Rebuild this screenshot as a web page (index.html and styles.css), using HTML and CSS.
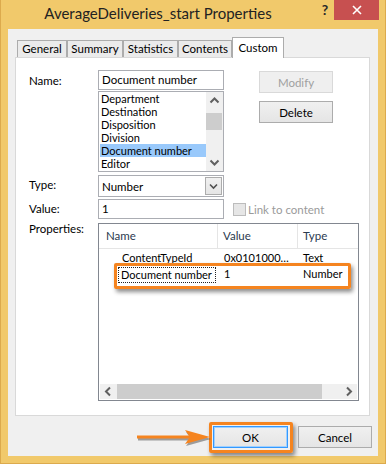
FILE: index.html
```html
<!DOCTYPE html>
<html lang="en">
<head>
    <meta charset="UTF-8">
    <title>AverageDeliveries_start Properties</title>
    <link rel="stylesheet" href="styles.css">
</head>
<body>
    <div class="window">
        <div class="titlebar">
            <div class="title">AverageDeliveries_start Properties</div>
            <div class="help">?</div>
            <div class="close">
                <svg width="10" height="10" viewBox="0 0 10 10"><path d="M1 1 L9 9 M9 1 L1 9" stroke="#fff" stroke-width="1.6"/></svg>
            </div>
        </div>

        <div class="client">
            <div class="tabs">
                <div class="tab" style="width:50px">General</div>
                <div class="tab" style="width:56px">Summary</div>
                <div class="tab" style="width:55px">Statistics</div>
                <div class="tab" style="width:54px">Contents</div>
                <div class="tab active" style="width:52px">Custom</div>
            </div>

            <div class="panel">
                <div class="form">
                    <div class="lbl row-name">Name:</div>
                    <div class="field name-field">Document number</div>
                    <div class="side-buttons">
                        <button class="btn disabled">Modify</button>
                        <button class="btn">Delete</button>
                    </div>

                    <div class="listbox">
                        <ul class="items">
                            <li>Department</li>
                            <li>Destination</li>
                            <li>Disposition</li>
                            <li>Division</li>
                            <li class="selected">Document number</li>
                            <li>Editor</li>
                        </ul>
                        <div class="vscroll">
                            <div class="sb-btn"><svg width="17" height="17"><polyline points="4.5,10.5 8.5,6.5 12.5,10.5" fill="none" stroke="#606060" stroke-width="2"/></svg></div>
                            <div class="sb-track"><div class="sb-thumb"></div></div>
                            <div class="sb-btn"><svg width="17" height="17"><polyline points="4.5,6.5 8.5,10.5 12.5,6.5" fill="none" stroke="#606060" stroke-width="2"/></svg></div>
                        </div>
                    </div>

                    <div class="lbl row-type">Type:</div>
                    <div class="select">
                        <span>Number</span>
                        <span class="drop"><svg width="15" height="16"><polyline points="4,6.5 7.5,10 11,6.5" fill="none" stroke="#505050" stroke-width="1.6"/></svg></span>
                    </div>

                    <div class="lbl row-value">Value:</div>
                    <div class="field value-field">1</div>
                    <div class="link"><span class="checkbox"></span>Link to content</div>

                    <div class="lbl row-props">Properties:</div>
                    <div class="listview">
                        <div class="lv-head">
                            <div class="c1">Name</div>
                            <div class="c2">Value</div>
                            <div class="c3">Type</div>
                        </div>
                        <div class="lv-rows">
                            <div class="lv-row">
                                <div class="c1"><span class="cell-text">ContentTypeId</span></div>
                                <div class="c2">0x0101000…</div>
                                <div class="c3">Text</div>
                            </div>
                            <div class="lv-row">
                                <div class="c1"><span class="cell-text focus">Document number</span></div>
                                <div class="c2">1</div>
                                <div class="c3">Number</div>
                            </div>
                        </div>
                        <div class="hscroll">
                            <div class="sb-btn"><svg width="17" height="15"><polyline points="10,3.5 6,7.5 10,11.5" fill="none" stroke="#606060" stroke-width="2"/></svg></div>
                            <div class="sb-track"><div class="sb-thumb"></div></div>
                            <div class="sb-btn"><svg width="17" height="15"><polyline points="7,3.5 11,7.5 7,11.5" fill="none" stroke="#606060" stroke-width="2"/></svg></div>
                        </div>
                    </div>
                </div>
            </div>

            <div class="footer">
                <button class="btn ok">OK</button>
                <button class="btn">Cancel</button>
            </div>
        </div>

        <!-- callouts drawn over the dialog -->
        <div class="callout hl-row"></div>
        <div class="callout hl-ok"></div>
        <svg class="arrow" width="90" height="26" viewBox="0 0 90 26">
            <g transform="translate(1,2)" fill="rgba(0,0,0,0.35)">
                <rect x="7" y="10.5" width="55" height="3"/>
                <path d="M55 5 L80 12 L55 19 L60 12 Z"/>
            </g>
            <g fill="#f5841f">
                <rect x="7" y="10.5" width="55" height="3"/>
                <path d="M55 5 L80 12 L55 19 L60 12 Z"/>
            </g>
        </svg>
    </div>
</body>
</html>
```

FILE: styles.css
```css
* {
    box-sizing: border-box;
}

body {
    margin: 0;
    font-family: "Lato", "Open Sans", sans-serif;
    font-size: 11.5px;
    color: #000;
    background: #f1c96b;
}

.window {
    position: relative;
    width: 386px;
    height: 464px;
    background: #f1c96b;
    border: 1px solid #dcaa4d;
    border-top: none;
    padding: 0 7px 7px;
    display: flex;
    flex-direction: column;
}

.titlebar {
    height: 29px;
    display: flex;
    align-items: flex-start;
}

.title {
    flex: 1;
    text-align: center;
    font-size: 15px;
    line-height: 27px;
    color: #222;
    padding-right: 8px;
}

.help {
    width: 18px;
    height: 20px;
    line-height: 20px;
    text-align: center;
    font-weight: bold;
    font-size: 14px;
    color: #2a2a2a;
}

.close {
    width: 45px;
    height: 20px;
    margin-right: -1px;
    background: #c75050;
    display: flex;
    align-items: center;
    justify-content: center;
}

.client {
    flex: 1;
    background: #f0f0f0;
    padding: 8px 8px 0 7px;
}

.tabs {
    display: flex;
    align-items: flex-end;
    height: 20px;
    padding-left: 2px;
}

.tab {
    height: 17px;
    line-height: 15px;
    border: 1px solid #acacac;
    border-bottom: none;
    background: #ebebeb;
    text-align: center;
    white-space: nowrap;
}

.tab.active {
    position: relative;
    z-index: 1;
    height: 21px;
    line-height: 19px;
    margin-bottom: -1px;
    background: #fff;
}

.panel {
    width: 355px;
    height: 359px;
    background: #fff;
    border: 1px solid #d9d9d9;
    padding: 12px 0 0 13px;
}

.form {
    display: grid;
    grid-template-columns: 69px 126px 1fr;
    grid-template-rows: auto auto auto auto auto;
    align-items: start;
}

.lbl {
    grid-column: 1;
    align-self: center;
    color: #000;
}

.row-name { grid-row: 1; }
.row-type { grid-row: 3; }
.row-value { grid-row: 4; }

.row-props {
    grid-row: 5;
    align-self: start;
    padding-top: 3px;
}

.field {
    grid-column: 2;
    height: 20px;
    line-height: 18px;
    border: 1px solid #abadb3;
    padding-left: 3px;
    background: #fff;
    white-space: nowrap;
}

.name-field { grid-row: 1; }

.value-field {
    grid-row: 4;
    margin-top: 2px;
}

.side-buttons {
    grid-column: 3;
    grid-row: 1 / 3;
    margin: 1px 0 0 35px;
    display: flex;
    flex-direction: column;
    gap: 8px;
}

.btn {
    width: 74px;
    height: 22px;
    font-family: inherit;
    font-size: 11.5px;
    color: #000;
    border: 1px solid #acacac;
    background: linear-gradient(#f0f0f0, #e5e5e5);
    padding: 0;
}

.btn.disabled {
    border-color: #d9d9d9;
    background: #efefef;
    color: #a0a0a0;
}

.listbox {
    grid-column: 2;
    grid-row: 2;
    height: 81px;
    margin-top: 1px;
    border: 1px solid #abadb3;
    display: flex;
}

.items {
    flex: 1;
    list-style: none;
    margin: 0;
    padding: 0;
    font-size: 11px;
}

.items li {
    height: 13px;
    line-height: 13px;
    padding-left: 2px;
    white-space: nowrap;
}

.items li.selected {
    background: #99c9fb;
    margin-left: 1px;
    padding-left: 1px;
}

.vscroll {
    width: 17px;
    background: #f0f0f0;
    display: flex;
    flex-direction: column;
}

.sb-btn {
    display: flex;
    align-items: center;
    justify-content: center;
}

.vscroll .sb-btn {
    height: 17px;
}

.vscroll .sb-track {
    flex: 1;
    padding-top: 4px;
}

.vscroll .sb-thumb {
    height: 17px;
    margin-right: 1px;
    background: #cdcdcd;
}

.select {
    grid-column: 2;
    grid-row: 3;
    height: 22px;
    margin-top: 3px;
    border: 1px solid #abadb3;
    display: flex;
    align-items: center;
    justify-content: space-between;
    padding-left: 3px;
}

.drop {
    width: 17px;
    height: 18px;
    margin-right: 1px;
    border: 1px solid #acacac;
    background: linear-gradient(#f0f0f0, #e5e5e5);
    display: flex;
    align-items: center;
    justify-content: center;
}

.link {
    grid-column: 3;
    grid-row: 4;
    margin: 2px 0 0 9px;
    height: 20px;
    display: flex;
    align-items: center;
    gap: 2px;
    color: #9a9a9a;
    white-space: nowrap;
}

.checkbox {
    width: 13px;
    height: 13px;
    border: 1px solid #bcbcbc;
    background: #e6e6e6;
}

.lv-head .c1, .lv-row .c1 { width: 119px; }
.lv-head .c2, .lv-row .c2 { width: 80px; }
.lv-head .c3, .lv-row .c3 { flex: 1; }

.listview {
    grid-column: 2 / 4;
    grid-row: 5;
    width: 261px;
    height: 178px;
    margin-top: 4px;
    border: 1px solid #828790;
    display: flex;
    flex-direction: column;
}

.lv-head {
    height: 25px;
    display: flex;
    border-bottom: 1px solid #e5e5e5;
    color: #2b3a4f;
}

.lv-head > div {
    line-height: 24px;
    border-right: 1px solid #e5e5e5;
    padding-left: 5px;
}

.lv-head .c1 {
    padding-left: 7px;
}

.lv-head .c3 {
    border-right: none;
}

.lv-rows {
    flex: 1;
    padding-top: 2px;
}

.lv-row {
    display: flex;
    height: 16px;
    line-height: 14px;
    font-size: 11px;
    white-space: nowrap;
}

.lv-row .c1 {
    padding-left: 23px;
}

.lv-row .c2 {
    padding-left: 6px;
}

.lv-row .c3 {
    padding-left: 5px;
}

.cell-text.focus {
    display: inline-block;
    width: 98px;
    height: 16px;
    margin-left: -4px;
    padding-left: 2px;
    border: 1px dotted #222;
}

.hscroll {
    height: 15px;
    margin: 0 1px 1px;
    background: #f0f0f0;
    display: flex;
}

.hscroll .sb-btn {
    width: 17px;
}

.hscroll .sb-track {
    flex: 1;
}

.hscroll .sb-thumb {
    width: 205px;
    height: 15px;
    background: #cdcdcd;
}

.footer {
    display: flex;
    justify-content: flex-end;
    gap: 10px;
    margin: 10px -2px 0 0;
}

.btn.ok {
    width: 75px;
    border-color: #3399ff;
    box-shadow: inset 0 0 0 1px #9fd0ff;
}

.callout {
    position: absolute;
    border: 3px solid #f5841f;
    border-radius: 2px;
    box-shadow: 2px 3px 4px rgba(0, 0, 0, 0.45);
}

.hl-row {
    left: 113px;
    top: 263px;
    width: 237px;
    height: 26px;
}

.hl-ok {
    left: 208px;
    top: 422px;
    width: 84px;
    height: 31px;
}

.arrow {
    position: absolute;
    left: 129px;
    top: 425px;
}
```
